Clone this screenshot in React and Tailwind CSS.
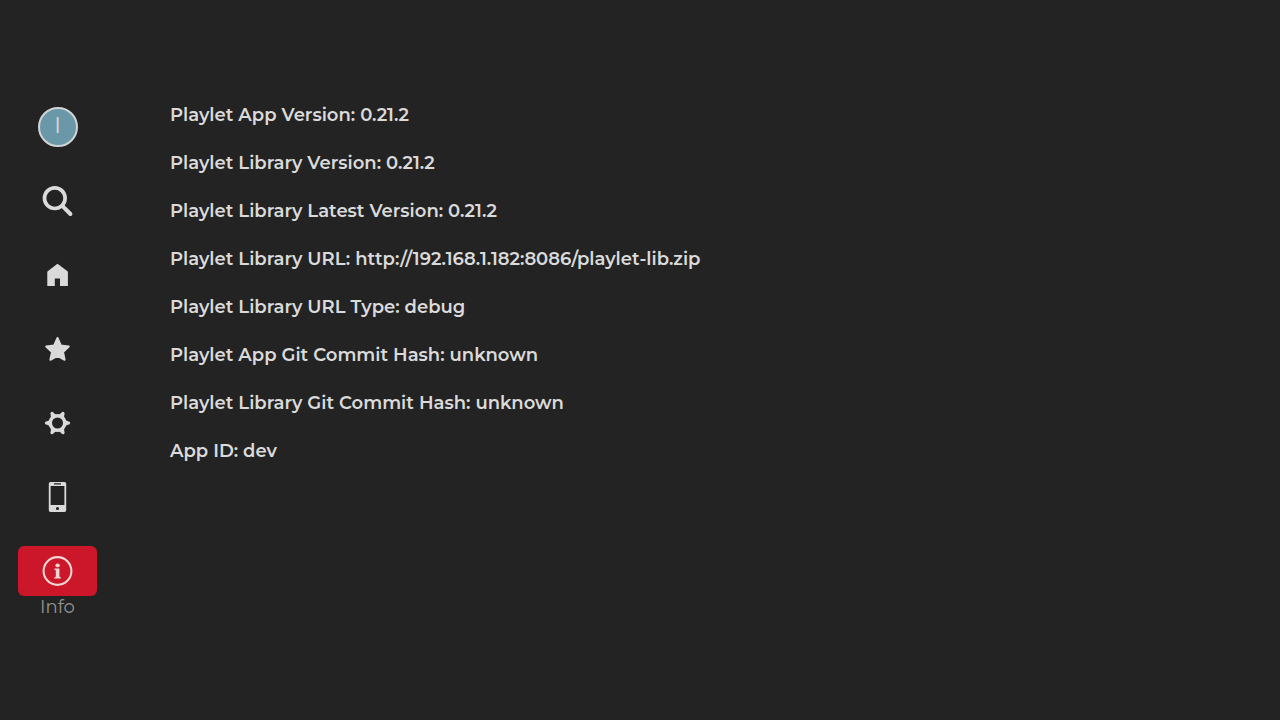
import React from "react";

function Icon({ children }) {
  return (
    <svg viewBox="0 0 39 40" className="h-10 w-[39px]" fill="currentColor" aria-hidden="true">
      {children}
    </svg>
  );
}

function SearchIcon() {
  return (
    <Icon>
      <circle cx="16.8" cy="17.2" r="10.3" fill="none" stroke="currentColor" strokeWidth="3.7" />
      <path d="M24.3 24.8 32.400 33" stroke="currentColor" strokeWidth="4" strokeLinecap="round" />
    </Icon>
  );
}

function HomeIcon() {
  return (
    <Icon>
      <path d="M19.5 8.8 29.2 16q.7.5.7 1.3V31H22v-7.600h-5.200V31H9.300V17.300q0-.8.7-1.300Z" />
    </Icon>
  );
}

function StarIcon() {
  return (
    <Icon>
      <path
        d="M19.5 9 22.8 16.4 30.8 17.4 25 22.9 26.6 30.8 19.5 26.9 12.4 30.8 14 22.9 8.2 17.4 16.2 16.4Z"
        stroke="currentColor"
        strokeWidth="2"
        strokeLinejoin="round"
      />
    </Icon>
  );
}

const teeth = [0, 60, 120, 180, 240, 300];

function GearIcon() {
  return (
    <Icon>
      <circle cx="19.5" cy="20" r="7.3" fill="none" stroke="currentColor" strokeWidth="3.6" />
      {teeth.map((angle) => (
        <path
          key={angle}
          d="M27 16.900 30 18.200Q32.200 18.300 32.200 20T30 21.800L27 23.100Z"
          transform={`rotate(${angle} 19.5 20)`}
        />
      ))}
    </Icon>
  );
}

function PhoneIcon() {
  return (
    <Icon>
      <path
        fillRule="evenodd"
        d="M12.5 5h14A1.7 1.7 0 0 1 28.200 6.700V33.300A1.700 1.700 0 0 1 26.500 35H12.500A1.700 1.700 0 0 1 10.800 33.300V6.700A1.700 1.700 0 0 1 12.500 5ZM12.600 9V28H26.400V9ZM16 6.200V7.400H23V6.200ZM19.500 29.900a1.600 1.600 0 1 0 0 3.200a1.600 1.600 0 1 0 0-3.200Z"
      />
    </Icon>
  );
}

function InfoIcon() {
  return (
    <Icon>
      <circle cx="19.5" cy="20" r="13.900" fill="none" stroke="currentColor" strokeWidth="2.1" />
      <ellipse cx="19.6" cy="14.400" rx="2.200" ry="1.900" />
      <path d="M16.500 17.600H21.400V25.500Q21.400 26.300 23 26.400V27.500H16.300V26.400Q17.800 26.300 17.800 25.500V19.700Q17.800 18.800 16.500 18.700Z" />
    </Icon>
  );
}

function Avatar() {
  return (
    <span className="flex h-10 w-10 justify-center rounded-full border-2 border-[#d0d4d5] bg-[#6b98a8] text-[22px] leading-[34px]">
      I
    </span>
  );
}

const items = [
  { name: "Account", Glyph: Avatar },
  { name: "Search", Glyph: SearchIcon },
  { name: "Home", Glyph: HomeIcon },
  { name: "Favorites", Glyph: StarIcon },
  { name: "Settings", Glyph: GearIcon },
  { name: "Remote", Glyph: PhoneIcon },
];

const details = [
  "Playlet App Version: 0.21.2",
  "Playlet Library Version: 0.21.2",
  "Playlet Library Latest Version: 0.21.2",
  "Playlet Library URL: http://192.168.1.182:8086/playlet-lib.zip",
  "Playlet Library URL Type: debug",
  "Playlet App Git Commit Hash: unknown",
  "Playlet Library Git Commit Hash: unknown",
  "App ID: dev",
];

export default function App() {
  return (
    <div className="flex min-h-screen bg-[#232323] font-['Montserrat','Inter',sans-serif] text-[#dadada]">
      <nav className="flex shrink-0 flex-col items-center gap-6 pt-[102px] pl-[18px]">
        {items.map(({ name, Glyph }) => (
          <button
            key={name}
            type="button"
            aria-label={name}
            className="flex h-[50px] w-[79px] items-center justify-center rounded-md"
          >
            <Glyph />
          </button>
        ))}
        <div className="flex flex-col items-center">
          <button
            type="button"
            aria-labelledby="info-label"
            aria-current="page"
            className="flex h-[50px] w-[79px] items-center justify-center rounded-md bg-[#cb1729] text-[#f0d6d3]"
          >
            <InfoIcon />
          </button>
          <span id="info-label" className="text-lg leading-[22px] text-[#929292]">
            Info
          </span>
        </div>
      </nav>
      <main className="min-w-0 flex-1 pt-[91px] pl-[73px]">
        <ul className="text-lg leading-[48px] font-semibold">
          {details.map((line) => (
            <li key={line} className="leading-[48px]">{line}</li>
          ))}
        </ul>
      </main>
    </div>
  );
}
